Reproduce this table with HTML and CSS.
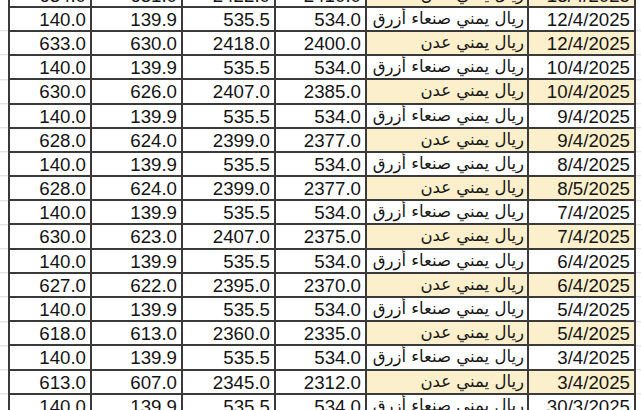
FILE: index.html
```html
<!DOCTYPE html>
<html lang="ar">
<head>
<meta charset="utf-8">
<link rel="stylesheet" href="styles.css">
</head>
<body>
<div class="sheet">
<div class="row aden"><div class="num">634.0</div><div class="num">631.0</div><div class="num">2422.0</div><div class="num">2410.0</div><div class="txt">ريال يمني عدن</div><div class="date">13/4/2025</div></div>
<div class="row"><div class="num">140.0</div><div class="num">139.9</div><div class="num">535.5</div><div class="num">534.0</div><div class="txt">ريال يمني صنعاء أزرق</div><div class="date">12/4/2025</div></div>
<div class="row aden"><div class="num">633.0</div><div class="num">630.0</div><div class="num">2418.0</div><div class="num">2400.0</div><div class="txt">ريال يمني عدن</div><div class="date">12/4/2025</div></div>
<div class="row"><div class="num">140.0</div><div class="num">139.9</div><div class="num">535.5</div><div class="num">534.0</div><div class="txt">ريال يمني صنعاء أزرق</div><div class="date">10/4/2025</div></div>
<div class="row aden"><div class="num">630.0</div><div class="num">626.0</div><div class="num">2407.0</div><div class="num">2385.0</div><div class="txt">ريال يمني عدن</div><div class="date">10/4/2025</div></div>
<div class="row"><div class="num">140.0</div><div class="num">139.9</div><div class="num">535.5</div><div class="num">534.0</div><div class="txt">ريال يمني صنعاء أزرق</div><div class="date">9/4/2025</div></div>
<div class="row aden"><div class="num">628.0</div><div class="num">624.0</div><div class="num">2399.0</div><div class="num">2377.0</div><div class="txt">ريال يمني عدن</div><div class="date">9/4/2025</div></div>
<div class="row"><div class="num">140.0</div><div class="num">139.9</div><div class="num">535.5</div><div class="num">534.0</div><div class="txt">ريال يمني صنعاء أزرق</div><div class="date">8/4/2025</div></div>
<div class="row aden"><div class="num">628.0</div><div class="num">624.0</div><div class="num">2399.0</div><div class="num">2377.0</div><div class="txt">ريال يمني عدن</div><div class="date">8/5/2025</div></div>
<div class="row"><div class="num">140.0</div><div class="num">139.9</div><div class="num">535.5</div><div class="num">534.0</div><div class="txt">ريال يمني صنعاء أزرق</div><div class="date">7/4/2025</div></div>
<div class="row aden"><div class="num">630.0</div><div class="num">623.0</div><div class="num">2407.0</div><div class="num">2375.0</div><div class="txt">ريال يمني عدن</div><div class="date">7/4/2025</div></div>
<div class="row"><div class="num">140.0</div><div class="num">139.9</div><div class="num">535.5</div><div class="num">534.0</div><div class="txt">ريال يمني صنعاء أزرق</div><div class="date">6/4/2025</div></div>
<div class="row aden"><div class="num">627.0</div><div class="num">622.0</div><div class="num">2395.0</div><div class="num">2370.0</div><div class="txt">ريال يمني عدن</div><div class="date">6/4/2025</div></div>
<div class="row"><div class="num">140.0</div><div class="num">139.9</div><div class="num">535.5</div><div class="num">534.0</div><div class="txt">ريال يمني صنعاء أزرق</div><div class="date">5/4/2025</div></div>
<div class="row aden"><div class="num">618.0</div><div class="num">613.0</div><div class="num">2360.0</div><div class="num">2335.0</div><div class="txt">ريال يمني عدن</div><div class="date">5/4/2025</div></div>
<div class="row"><div class="num">140.0</div><div class="num">139.9</div><div class="num">535.5</div><div class="num">534.0</div><div class="txt">ريال يمني صنعاء أزرق</div><div class="date">3/4/2025</div></div>
<div class="row aden"><div class="num">613.0</div><div class="num">607.0</div><div class="num">2345.0</div><div class="num">2312.0</div><div class="txt">ريال يمني عدن</div><div class="date">3/4/2025</div></div>
<div class="row"><div class="num">140.0</div><div class="num">139.9</div><div class="num">535.5</div><div class="num">534.0</div><div class="txt">ريال يمني صنعاء أزرق</div><div class="date">30/3/2025</div></div>
</div>
</body>
</html>
```

FILE: styles.css
```css
html {
  background-color: #ffffff;
  background-image: repeating-linear-gradient(to bottom, transparent 0, transparent 23.2px, #d9d9d9 23.2px, #d9d9d9 24.2px);
  background-position: 0 7.3px;
  height: 100%;
  overflow: hidden;
}

body {
  margin: 0;
  padding: 0;
}

.sheet {
  display: flex;
  flex-direction: column;
  gap: 2px;
  width: 628px;
  box-sizing: border-box;
  padding: 2px;
  margin: -18.4px 0 0 8px;
  background: #3a3a3a;
  font-family: "Liberation Sans", Arial, sans-serif;
  font-size: 18.7px;
  color: #141414;
}

.row {
  display: grid;
  grid-template-columns: 80px 89px 91px 89px 160px 105px;
  column-gap: 2px;
  height: 22.2px;
}

.row > div {
  background: #ffffff;
  text-align: right;
  padding-right: 4px;
  line-height: 23px;
  white-space: nowrap;
  overflow: hidden;
}

.row > .txt {
  font-family: "DejaVu Sans", sans-serif;
  font-size: 16.5px;
  direction: rtl;
  padding-right: 3px;
  line-height: 22px;
}

.aden > .txt,
.aden > .date {
  background: #fcefcb;
}
```
